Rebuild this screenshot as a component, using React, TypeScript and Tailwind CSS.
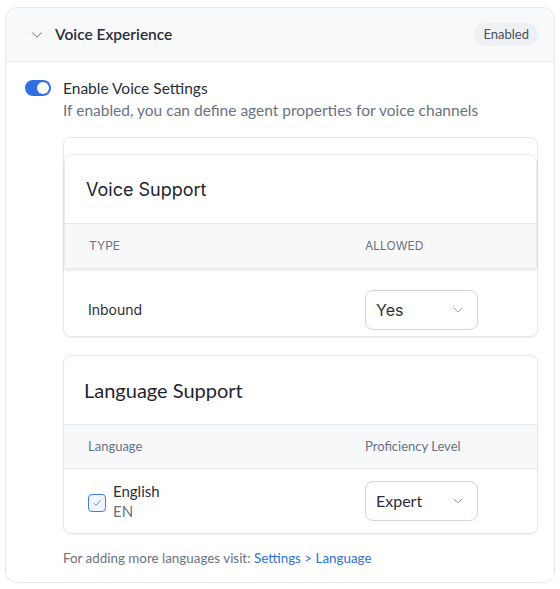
import { ChevronDown } from 'lucide-react';

const geo = { fontFamily: 'Lato, "Noto Sans", sans-serif' };
const inter = { fontFamily: 'Inter, "Liberation Sans", sans-serif' };

function Select({ value, font }: { value: string; font: React.CSSProperties }) {
    return (
        <div className="flex h-10 w-[113px] items-center justify-between rounded-lg border border-[#d4d4de] bg-white pl-[10px] pr-[11px]" style={font}>
            <span className="text-[16px] text-[#2a2f3a]">{value}</span>
            <ChevronDown className="h-4 w-4 text-[#8a8f9c]" strokeWidth={1.25} />
        </div>
    );
}

export default function App() {
    return (
        <div className="min-h-[589px] bg-white pl-[5px] pt-[7px]" style={geo}>
            <div className="w-[550px] overflow-hidden rounded-xl border border-[#e6e8ec] bg-white">
                <div className="flex h-[54px] items-center justify-between border-b border-[#e6e8ec] bg-[#f8f9fb] pl-[22px] pr-4">
                    <div className="flex items-center gap-[9px]">
                        <ChevronDown className="h-[18px] w-[18px] text-[#5b6270]" strokeWidth={1.25} />
                        <span className="text-[15.5px] font-semibold text-[#2a2f3a]">Voice Experience</span>
                    </div>
                    <span className="rounded-full bg-[#eef0f3] px-[9px] py-[2px] text-[13px] text-[#4a5160]">Enabled</span>
                </div>

                <div className="pb-[14px] pl-[19px] pr-4 pt-[16px]">
                    <div className="flex gap-3">
                        <div className="mt-[2px] flex h-4 w-[26px] items-center justify-end rounded-full bg-[#2f6fe0] pr-[2px]">
                            <div className="h-3 w-3 rounded-full bg-white" />
                        </div>
                        <div className="flex flex-col">
                            <span className="text-[15.5px] leading-5 text-[#2a2f3a]">Enable Voice Settings</span>
                            <span className="mt-[2px] text-[15.5px] leading-5 text-[#6b7280]">If enabled, you can define agent properties for voice channels</span>
                        </div>
                    </div>

                    <div className="ml-[38px] mt-[17px] flex flex-col gap-[18px]">
                        <div className="rounded-lg border border-[#e5e7eb] bg-white pt-4 shadow-[0_1px_2px_rgba(0,0,0,0.06)]" style={inter}>
                            <div className="rounded-t-lg border border-[#e8eaee] shadow-[0_2px_3px_rgba(0,0,0,0.08)]">
                                <div className="flex h-[68px] items-center px-[21px] text-[18px] text-[#1f2430]">Voice Support</div>
                                <div className="flex h-[45px] items-center border-t border-[#e8eaee] bg-[#f7f8fa] text-[12px] text-[#6b7280]">
                                    <span className="w-[300px] pl-6">TYPE</span>
                                    <span>ALLOWED</span>
                                </div>
                            </div>
                            <div className="flex h-[67px] items-center pt-[14px]">
                                <span className="w-[301px] pl-6 text-[14px] text-[#2a2f3a]">Inbound</span>
                                <Select value="Yes" font={inter} />
                            </div>
                        </div>

                        <div className="rounded-lg border border-[#e5e7eb] bg-white shadow-[0_1px_2px_rgba(0,0,0,0.06)]">
                            <div className="flex h-[68px] items-center px-5 text-[20px] text-[#1f2430]">Language Support</div>
                            <div className="flex h-[45px] items-center border-y border-[#e8eaee] bg-[#f7f8fa] text-[13px] text-[#6b7280]">
                                <span className="w-[301px] pl-6">Language</span>
                                <span>Proficiency Level</span>
                            </div>
                            <div className="flex h-[64px] items-center">
                                <div className="flex w-[301px] items-center gap-[7px] pl-6">
                                    <div className="mt-[4px] flex h-[18px] w-[18px] items-center justify-center rounded-[4px] border-[1.5px] border-[#3b7cf0] bg-[#f1f5ff]">
                                        <svg viewBox="0 0 12 12" className="h-[10px] w-[10px]" fill="none" stroke="#3b7cf0" strokeWidth="1">
                                            <path d="M2 6.2 L4.8 9 L10 3" />
                                        </svg>
                                    </div>
                                    <div className="flex flex-col text-[15px] leading-5">
                                        <span className="text-[#2a2f3a]">English</span>
                                        <span className="text-[#6b7280]">EN</span>
                                    </div>
                                </div>
                                <Select value="Expert" font={geo} />
                            </div>
                        </div>

                        <div className="-mt-[4px] text-[13.4px] text-[#6b7280]">
                            For adding more languages visit: <span className="text-[#2f6fe0]">Settings &gt; Language</span>
                        </div>
                    </div>
                </div>
            </div>
        </div>
    );
}
